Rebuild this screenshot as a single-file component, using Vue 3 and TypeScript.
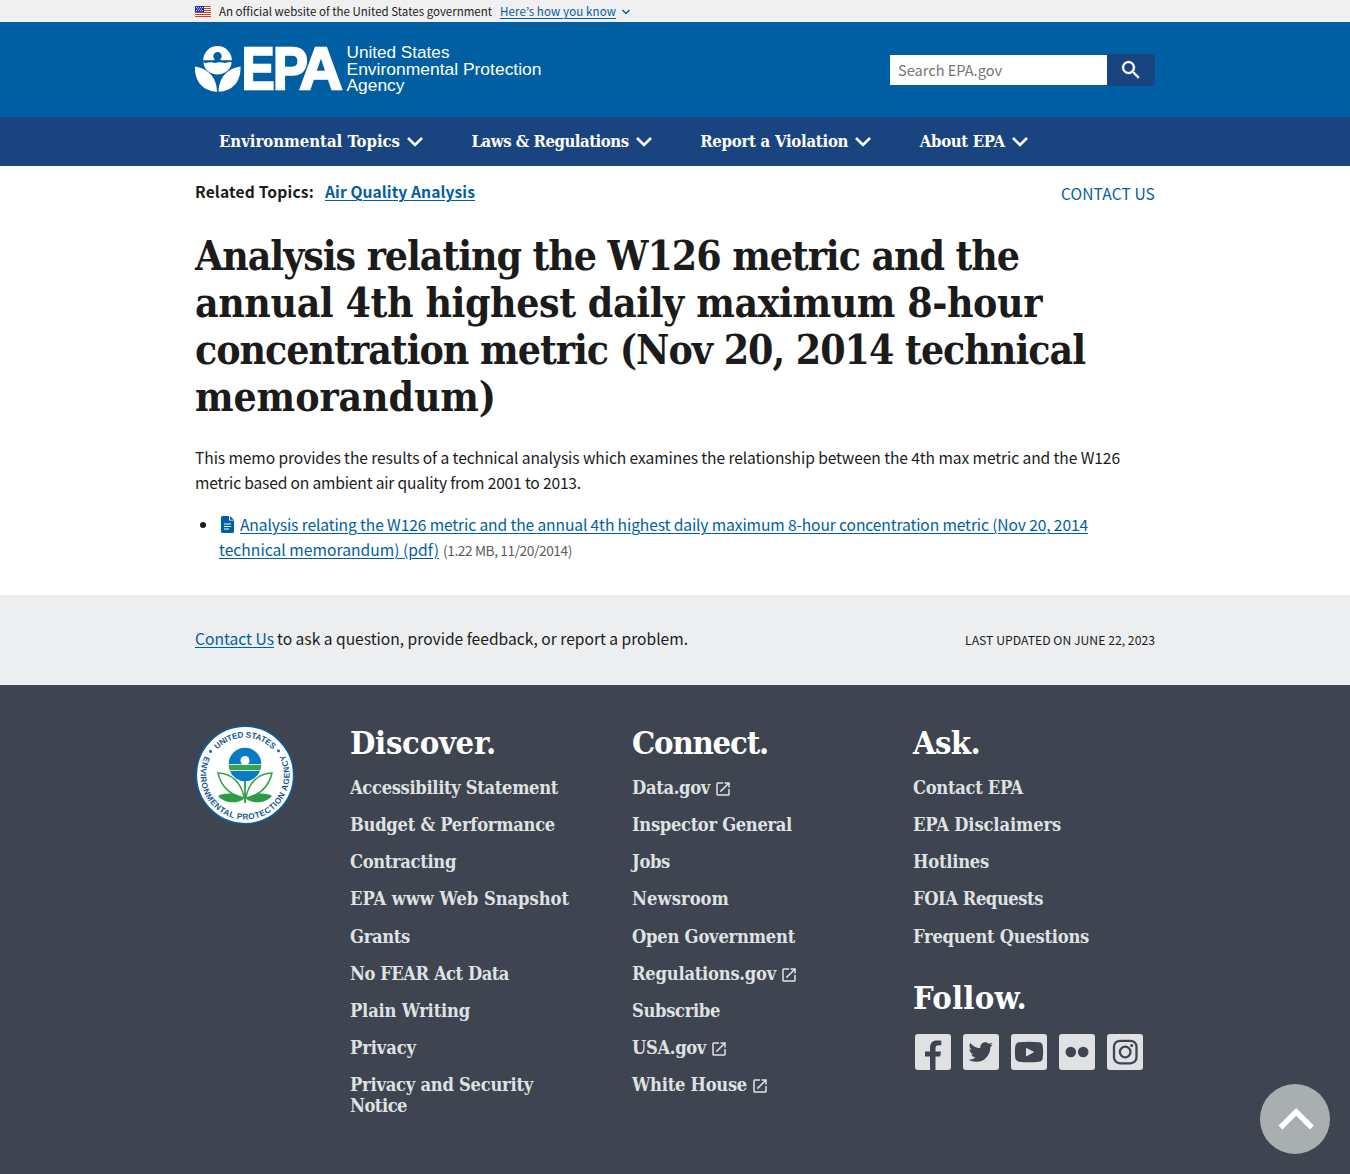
<script setup lang="ts">
interface FooterLink {
  label: string
  width: number
  external?: boolean
}

interface FooterGroup {
  title: string
  width: number
  links: FooterLink[]
}

// Tracks text out (or in) so that a label sets to a given measure in pixels.
const vMeasure = {
  mounted(el: HTMLElement, binding: { value: number }) {
    const count = (el.textContent ?? '').trim().length
    const natural = el.getBoundingClientRect().width
    el.style.letterSpacing = `${((binding.value - natural) / count).toFixed(4)}px`
  },
}

const nav = [
  { label: 'Environmental Topics', width: 181 },
  { label: 'Laws & Regulations', width: 157 },
  { label: 'Report a Violation', width: 148 },
  { label: 'About EPA', width: 85 },
]

const titleLines = [
  { text: 'Analysis relating the W126 metric and the', width: 824 },
  { text: 'annual 4th highest daily maximum 8-hour', width: 847 },
  { text: 'concentration metric (Nov 20, 2014 technical', width: 890 },
  { text: 'memorandum)', width: 301 },
]

const discover: FooterGroup = {
  title: 'Discover.',
  width: 146,
  links: [
    { label: 'Accessibility Statement', width: 208 },
    { label: 'Budget & Performance', width: 205 },
    { label: 'Contracting', width: 106 },
    { label: 'EPA www Web Snapshot', width: 219 },
    { label: 'Grants', width: 60 },
    { label: 'No FEAR Act Data', width: 159 },
    { label: 'Plain Writing', width: 120 },
    { label: 'Privacy', width: 66 },
  ],
}

const connect: FooterGroup = {
  title: 'Connect.',
  width: 136,
  links: [
    { label: 'Data.gov', width: 78, external: true },
    { label: 'Inspector General', width: 160 },
    { label: 'Jobs', width: 38 },
    { label: 'Newsroom', width: 97 },
    { label: 'Open Government', width: 163 },
    { label: 'Regulations.gov', width: 144, external: true },
    { label: 'Subscribe', width: 88 },
    { label: 'USA.gov', width: 74, external: true },
    { label: 'White House', width: 115, external: true },
  ],
}

const ask: FooterGroup = {
  title: 'Ask.',
  width: 67,
  links: [
    { label: 'Contact EPA', width: 110 },
    { label: 'EPA Disclaimers', width: 148 },
    { label: 'Hotlines', width: 76 },
    { label: 'FOIA Requests', width: 130 },
    { label: 'Frequent Questions', width: 176 },
  ],
}

const stripes = [0, 2, 4, 6, 8, 10]
</script>

<template>
  <div class="page">
    <div class="banner">
      <div class="wrap banner-row">
        <svg class="flag" width="16" height="11" viewBox="0 0 16 11">
          <rect width="16" height="11" fill="#fff" />
          <rect v-for="y in stripes" :key="y" :y="y" width="16" height="1" fill="#db3e1f" />
          <rect width="9" height="6" fill="#1e33b1" />
          <path d="M1 1.5h7M2 3h6M1 4.5h7" stroke="#fff" stroke-width=".8" stroke-dasharray="1 1" />
        </svg>
        <span v-measure="273">An official website of the United States government</span>
        <a class="how" href="#"><span v-measure="116">Here’s how you know</span></a>
        <svg class="how-arrow" width="10" height="7" viewBox="0 0 10 7">
          <path d="M1.500 2 5 5.500l3.500-3.500" fill="none" stroke="#005ea2" stroke-width="1.500" />
        </svg>
      </div>
    </div>

    <header class="header">
      <div class="wrap header-row">
        <svg class="logo" width="350" height="52" viewBox="0 0 350 52">
          <g fill="#fff">
            <path d="M8.200 16.300a14.300 14.300 0 0 1 28.600 0H27.500c-1.200 0-2-.2-2.200-1a4.200 4.200 0 1 0-5.600 0c-.2.800-1 1-2.200 1z" />
            <path d="M8.300 18.300q2.300 1.200 4.700.3t4.800 0 4.800 0 4.800 0 4.800 0 4.500-.3C36 25.500 30 30.500 22.500 30.500S9 25.500 8.300 18.300z" />
            <path d="M0 22.500c12 2 21.500 9.500 22 25.300C8.500 47 -.5 38.500 0 22.500z" />
            <path d="M45.500 22.500c-12 2-21.500 9.500-22 25.300 13.500-.8 22.500-9.300 22-25.300z" />
            <g font-size="60" font-weight="700" stroke="#fff" stroke-width="2.400">
              <text transform="translate(46.800 45.400) scale(.82 1)">E</text>
              <text transform="translate(77.900 45.400) scale(.87 1)">P</text>
              <text transform="translate(104.300 45.400) scale(1 1)">A</text>
            </g>
            <g font-size="16.300">
              <text x="151.500" y="14" textLength="103" lengthAdjust="spacingAndGlyphs">United States</text>
              <text x="151.500" y="30.700" textLength="195" lengthAdjust="spacingAndGlyphs">Environmental Protection</text>
              <text x="151.500" y="47.300" textLength="58" lengthAdjust="spacingAndGlyphs">Agency</text>
            </g>
          </g>
        </svg>
        <form class="search" @submit.prevent>
          <div class="search-field"><span v-measure="104">Search EPA.gov</span></div>
          <button class="search-button" type="submit" aria-label="Search">
            <svg width="24" height="24" viewBox="0 0 24 24">
              <path fill="#fff" stroke="#fff" stroke-width=".3" d="M15.500 14h-.79l-.28-.27A6.470 6.470 0 0 0 16 9.500 6.500 6.500 0 1 0 9.500 16c1.610 0 3.090-.59 4.230-1.570l.27.28v.79l5 4.990L20.490 19l-4.990-5zm-6 0C7.010 14 5 11.990 5 9.500S7.010 5 9.500 5 14 7.010 14 9.500 11.990 14 9.500 14z" />
            </svg>
          </button>
        </form>
      </div>
    </header>

    <nav class="nav">
      <div class="wrap nav-row">
        <a v-for="item in nav" :key="item.label" class="nav-item" href="#">
          <span class="nav-label"><span v-measure="item.width">{{ item.label }}</span></span>
          <svg width="18" height="12" viewBox="0 0 18 12">
            <path d="m2 2 7 7 7-7" fill="none" stroke="#fff" stroke-width="2.600" />
          </svg>
        </a>
      </div>
    </nav>

    <main class="wrap main">
      <div class="topics">
        <div class="related">
          <span v-measure="119">Related Topics:</span>
          <a class="link" href="#"><span v-measure="150">Air Quality Analysis</span></a>
        </div>
        <a class="contact" href="#"><span v-measure="94">CONTACT US</span></a>
      </div>

      <h1 class="title">
        <span v-for="line in titleLines" :key="line.text" class="title-line">
          <span v-measure="line.width">{{ line.text }}</span>
        </span>
      </h1>

      <p class="copy">
        <span v-measure="925">This memo provides the results of a technical analysis which examines the relationship between the 4th max metric and the W126</span><br />
        <span v-measure="386">metric based on ambient air quality from 2001 to 2013.</span>
      </p>

      <ul class="files">
        <li>
          <svg class="file-icon" width="13" height="17" viewBox="0 0 13 17">
            <path fill="#005ea2" d="M1.500 0H8v4.500h5V15.500A1.500 1.500 0 0 1 11.500 17h-10A1.500 1.500 0 0 1 0 15.500v-14A1.500 1.500 0 0 1 1.500 0zM9 0l4 3.700H9z" />
            <path d="M3 8h7M3 10.500h7M3 13h5" stroke="#fff" stroke-width="1.200" />
          </svg>
          <a class="link" href="#"><span v-measure="848">Analysis relating the W126 metric and the annual 4th highest daily maximum 8-hour concentration metric (Nov 20, 2014</span><br /><span v-measure="220">technical memorandum) (pdf)</span></a>
          <span class="size"><span v-measure="129">(1.22 MB, 11/20/2014)</span></span>
        </li>
      </ul>
    </main>

    <div class="feedback">
      <div class="wrap feedback-row">
        <p class="feedback-copy">
          <a class="link" href="#"><span v-measure="79">Contact Us</span></a>
          <span v-measure="411">to ask a question, provide feedback, or report a problem.</span>
        </p>
        <span class="updated"><span v-measure="190">LAST UPDATED ON JUNE 22, 2023</span></span>
      </div>
    </div>

    <footer class="footer">
      <div class="wrap footer-grid">
        <svg class="seal" width="100" height="100" viewBox="0 0 100 100">
          <defs>
            <path id="seal-top" d="M12.500 50a37.500 37.500 0 0 1 75 0" />
            <path id="seal-bottom" d="M9.700 31.200a44.500 44.500 0 1 0 80.600 0" />
          </defs>
          <circle cx="50" cy="50" r="48.800" fill="#fff" stroke="#0b5d94" stroke-width="1.800" />
          <g class="seal-text" font-size="8.200" fill="#14598f">
            <text><textPath href="#seal-top" startOffset="50%" text-anchor="middle" textLength="62">UNITED STATES</textPath></text>
            <text><textPath href="#seal-bottom" startOffset="0" textLength="180">ENVIRONMENTAL PROTECTION AGENCY</textPath></text>
          </g>
          <circle cx="15.500" cy="26.500" r="1.400" fill="#14598f" />
          <circle cx="83.500" cy="26" r="1.400" fill="#14598f" />
          <path d="M33.700 39a16.300 16.300 0 0 1 32.600 0z" fill="#0a7bc3" />
          <path d="M33.700 39.700h32.600q0 3-1 5.500H34.700q-1-2.500-1-5.500z" fill="#37a34a" />
          <path d="M34.900 46h30.200a16.300 16.300 0 0 1-30.200 0z" fill="#0a7bc3" />
          <circle cx="50" cy="35.500" r="4.500" fill="#fff" />
          <g fill="#fff" stroke="#37a34a" stroke-width="1.500">
            <path d="M23 48C36 48 47 58 49 73 35 70 26 61 23 48z" />
            <path d="M77 48C64 48 53 58 51 73 65 70 74 61 77 48z" />
          </g>
          <path d="M23 71c8-4 19-3 26 3-8 5.500-20 4-26-3zM77 71c-8-4-19-3-26 3 8 5.500 20 4 26-3z" fill="#2f9a45" />
          <path d="M50 56v22" stroke="#2f9a45" stroke-width="1.800" />
        </svg>

        <section v-for="group in [discover, connect]" :key="group.title" class="group">
          <h2><span v-measure="group.width">{{ group.title }}</span></h2>
          <ul>
            <li v-for="item in group.links" :key="item.label">
              <a href="#"><span v-measure="item.width">{{ item.label }}</span></a>
              <svg v-if="item.external" class="external" width="18" height="18" viewBox="0 0 24 24">
                <path fill="#dfe1e2" d="M19 19H5V5h7V3H5a2 2 0 0 0-2 2v14a2 2 0 0 0 2 2h14c1.100 0 2-.9 2-2v-7h-2v7zM14 3v2h3.590l-9.830 9.830 1.410 1.410L19 6.410V10h2V3h-7z" />
              </svg>
            </li>
            <li v-if="group.title === 'Discover.'">
              <a href="#"><span v-measure="183">Privacy and Security</span><br /><span v-measure="57">Notice</span></a>
            </li>
          </ul>
        </section>

        <section class="group">
          <h2><span v-measure="ask.width">{{ ask.title }}</span></h2>
          <ul>
            <li v-for="item in ask.links" :key="item.label">
              <a href="#"><span v-measure="item.width">{{ item.label }}</span></a>
            </li>
          </ul>
          <h2 class="follow"><span v-measure="114">Follow.</span></h2>
          <div class="social">
            <svg viewBox="0 0 36 36"><rect width="36" height="36" rx="3" fill="#dfe1e2" />
              <path class="mark" d="M15 36V22.500h-5V17.500h5v-3.700c0-4.800 2.700-7.300 7-7.300 1.700 0 3 .1 4.300.3v4.500h-2.500c-2.500 0-3.300 1.200-3.300 3v3.200H26l-.8 5h-4.700V36z" /></svg>
            <svg viewBox="0 0 36 36"><rect width="36" height="36" rx="3" fill="#dfe1e2" />
              <path class="mark" transform="translate(3.700 3.500) scale(1.160)" d="M22.460 6c-.77.350-1.600.58-2.460.69.880-.53 1.560-1.370 1.880-2.380-.83.500-1.750.850-2.720 1.050C18.370 4.500 17.260 4 16 4c-2.350 0-4.270 1.920-4.270 4.290 0 .34.040.67.110.98C8.280 9.090 5.110 7.380 3 4.790c-.37.630-.58 1.370-.58 2.150 0 1.490.75 2.810 1.910 3.560-.71 0-1.370-.2-1.950-.5v.03c0 2.080 1.480 3.820 3.440 4.210a4.220 4.220 0 0 1-1.930.07 4.280 4.280 0 0 0 4 2.980 8.521 8.521 0 0 1-5.330 1.840c-.34 0-.68-.02-1.020-.06C3.440 20.290 5.700 21 8.120 21 16 21 20.330 14.460 20.330 8.790c0-.19 0-.37-.01-.56.840-.6 1.560-1.360 2.140-2.230z" /></svg>
            <svg viewBox="0 0 36 36"><rect width="36" height="36" rx="3" fill="#dfe1e2" />
              <path class="mark" d="M8 8.300Q18 7.300 28 8.300q3.200.4 3.700 3.500.8 6.200 0 12.400-.5 3.100-3.700 3.500-10 1-20 0-3.200-.4-3.700-3.500-.8-6.200 0-12.400Q4.800 8.700 8 8.300z" />
              <path d="m15 13.800 8.300 4.200-8.300 4.500z" fill="#dfe1e2" /></svg>
            <svg viewBox="0 0 36 36"><rect width="36" height="36" rx="3" fill="#dfe1e2" />
              <circle class="mark" cx="11.800" cy="18" r="5.300" /><circle class="mark" cx="24.200" cy="18" r="5.300" /></svg>
            <svg viewBox="0 0 36 36"><rect width="36" height="36" rx="3" fill="#dfe1e2" />
              <rect class="stroke" x="7" y="6.800" width="22.500" height="22.500" rx="6" /><circle class="stroke" cx="18.200" cy="18" r="5.300" /><circle class="mark" cx="24.700" cy="11.500" r="1.500" /></svg>
          </div>
        </section>
      </div>
    </footer>

    <a class="to-top" href="#" aria-label="Back to top">
      <svg width="70" height="70" viewBox="0 0 70 70">
        <path d="M20.500 43.500 36.200 27.800 51.800 43.500" fill="none" stroke="#fff" stroke-width="5.500" />
      </svg>
    </a>
  </div>
</template>

<style>
body {
  background: #fff;
}
</style>

<style scoped>
.page {
  height: 1174px;
  overflow: hidden;
  font-family: "Noto Sans CJK KR", "Open Sans", sans-serif;
  font-size: 15.6px;
  line-height: 25px;
  color: #1b1b1b;
  white-space: nowrap;
}
.wrap {
  width: 960px;
  margin: 0 auto;
}
a {
  text-decoration: none;
  color: inherit;
}
.link,
.how {
  color: #005ea2;
  text-decoration: underline;
  text-underline-offset: 1.500px;
  text-decoration-thickness: 1px;
}
.banner {
  height: 22px;
  background: #f0f0f0;
  font-size: 11.500px;
  line-height: 22px;
}
.banner-row {
  display: flex;
  align-items: center;
}
.flag {
  margin-right: 8px;
}
.how {
  margin-left: 8px;
}
.how-arrow {
  margin-left: 5px;
}
.header {
  height: 95px;
  background: #005ea2;
}
.header-row {
  display: flex;
  justify-content: space-between;
  align-items: flex-start;
}
.logo {
  margin-top: 22px;
  overflow: visible;
  font-family: "Liberation Sans", Arial, sans-serif;
}
.search {
  display: flex;
  margin-top: 32px;
}
.search-field {
  box-sizing: border-box;
  width: 217px;
  height: 30px;
  margin-top: 1px;
  padding-left: 8px;
  background: #fff;
  color: #757575;
  font-size: 14.600px;
  line-height: 29px;
}
.search-button {
  display: flex;
  width: 48px;
  height: 32px;
  padding: 0;
  align-items: center;
  justify-content: center;
  border: 0;
  border-radius: 0 4px 4px 0;
  background: #1a4480;
}
.nav {
  height: 49px;
  background: #1a4480;
  color: #fff;
}
.nav-row {
  display: flex;
  gap: 47.600px;
  padding-left: 24px;
  box-sizing: border-box;
}
.nav-item {
  display: flex;
  align-items: center;
  gap: 6px;
  height: 49px;
  font: 700 16.600px/20px "DejaVu Serif Condensed", "DejaVu Serif", serif;
}
.nav-label {
  margin-bottom: 2px;
}
.topics {
  display: flex;
  justify-content: space-between;
  padding-top: 13px;
}
.related {
  display: flex;
  gap: 11px;
  font-weight: 700;
}
.contact {
  margin-top: 2px;
  color: #005ea2;
}
.main {
  height: 429px;
}
.title {
  margin: 27px 0 0;
  font: 700 40.600px/47px "DejaVu Serif Condensed", "DejaVu Serif", serif;
}
.title-line {
  display: block;
}
.copy {
  margin: 24px 0 0;
}
.files {
  margin: 17px 0 0;
  padding-left: 24px;
}
.file-icon {
  margin: 0 6px 0 2px;
  vertical-align: -2px;
}
.size {
  margin-left: 4px;
  color: #5c5c5c;
  font-size: 13.700px;
}
.feedback {
  height: 90px;
  background: #edeeef;
}
.feedback-row {
  display: flex;
  justify-content: space-between;
  align-items: center;
  height: 90px;
}
.feedback-copy {
  display: flex;
  gap: 3px;
  margin: 0 0 4px;
}
.updated {
  font-size: 12.200px;
}
.footer {
  height: 489px;
  background: #3e4450;
}
.footer-grid {
  display: grid;
  grid-template-columns: 155px 282px 281px 242px;
  padding-top: 40px;
}
.seal-text {
  font-family: "Liberation Sans", Arial, sans-serif;
  font-weight: 700;
}
.group {
  font: 700 18.200px/21px "DejaVu Serif Condensed", "DejaVu Serif", serif;
  color: #dfe1e2;
}
.group h2 {
  margin: 0;
  color: #fff;
  font-size: 32.500px;
  line-height: 35px;
}
.group ul {
  margin: 17px 0 0;
  padding: 0;
  list-style: none;
}
.group li {
  height: 21px;
  margin-bottom: 16.130px;
}
.external {
  margin-left: 4px;
  vertical-align: -4px;
}
.group h2.follow {
  margin-top: 33px;
}
.social {
  display: flex;
  gap: 12px;
  margin: 19.500px 0 0 2px;
}
.social svg {
  width: 36px;
  height: 36px;
}
.mark {
  fill: #3e4450;
}
.stroke {
  fill: none;
  stroke: #3e4450;
  stroke-width: 2.300;
}
.to-top {
  position: fixed;
  right: 20px;
  bottom: 20px;
  width: 70px;
  height: 70px;
  border-radius: 50%;
  background: #a9aeb1;
}
</style>
